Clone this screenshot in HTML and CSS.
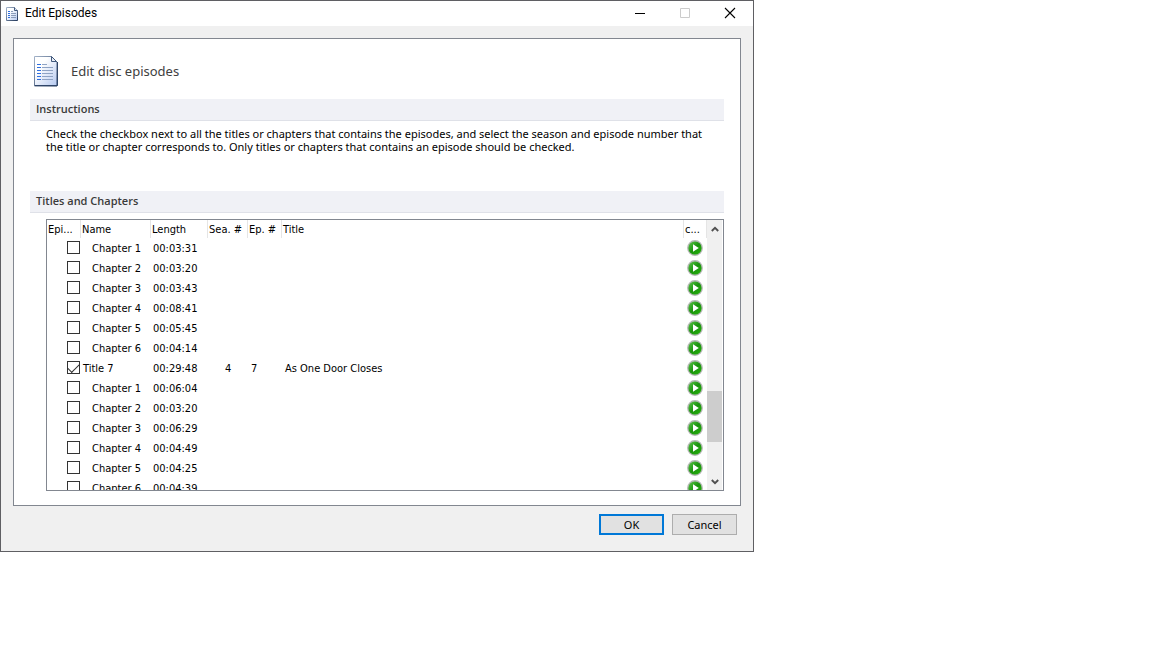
FILE: index.html
```html
<!DOCTYPE html>
<html lang="en">
<head>
<meta charset="utf-8">
<title>Edit Episodes</title>
<link rel="stylesheet" href="styles.css">
</head>
<body>
<svg class="defs" aria-hidden="true">
  <defs>
    <linearGradient id="paper" x1="0" y1="0" x2="1" y2="1"><stop offset="0.3" stop-color="#fff"/><stop offset="1" stop-color="#b4c8f0"/></linearGradient>
    <linearGradient id="edge" x1="0" y1="0" x2="1" y2="1"><stop offset="0" stop-color="#a3b3c9"/><stop offset="1" stop-color="#24395c"/></linearGradient>
    <linearGradient id="green" x1="0" y1="0" x2="1" y2="1"><stop offset="0" stop-color="#5fc84c"/><stop offset="0.5" stop-color="#1b930d"/><stop offset="1" stop-color="#25b40b"/></linearGradient>
    <symbol id="play" viewBox="0 0 16 16">
      <circle cx="8" cy="8" r="7.9" fill="#b4b8b4"/>
      <circle cx="8" cy="8" r="6.6" fill="url(#green)"/>
      <path d="M6 4.2v7.6L11.8 8z" fill="#fff"/>
    </symbol>
  </defs>
</svg>
<main class="window">
  <header class="titlebar">
    <svg class="app-icon" viewBox="0 0 14 16" aria-hidden="true">
      <path d="M1.5 1.5h8l3 3v10h-11z" fill="url(#paper)" stroke="url(#edge)"/>
      <path d="M9.5 1.5v3h3" fill="#dde5f2" stroke="#40587c"/>
      <path d="M3 5.5h2M3 7.5h2M3 9.5h2M3 11.5h2" stroke="#2f6fe0"/>
      <path d="M6 5.5h2M6 7.5h5M6 9.5h5M6 11.5h5" stroke="#8a9cba"/>
    </svg>
    <h1 class="caption">Edit Episodes</h1>
    <div class="controls">
      <button class="control" aria-label="Minimize"><svg viewBox="0 0 10 10"><path d="M0 5.5h10" stroke="#000"/></svg></button>
      <button class="control" aria-label="Maximize" disabled><svg viewBox="0 0 10 10"><path d="M.5.5h9v9h-9z" fill="none" stroke="#ccc"/></svg></button>
      <button class="control" aria-label="Close"><svg viewBox="0 0 10 10"><path d="M0 0l10 10M10 0L0 10" stroke="#000" stroke-width="1.1"/></svg></button>
    </div>
  </header>
  <div class="panel">
    <div class="heading">
      <svg class="doc-icon" viewBox="0 0 24 31" aria-hidden="true">
        <path d="M.5.5h17l5.5 5.5v24H.5z" fill="url(#paper)" stroke="url(#edge)"/>
        <path d="M1 29.500h22.500V6" fill="none" stroke="#2f4568"/>
        <path d="M17.500.5v5h5z" fill="#e8edf5" stroke="#40587c"/>
        <path d="M3 8.500h4M3 11.500h4M3 14.500h4M3 17.500h4M3 20.500h4M3 23.500h4" stroke="#2f6fe0"/>
        <path d="M8 8.500h5M8 11.500h11M8 14.500h11M8 17.500h11M8 20.500h11M8 23.500h11" stroke="#8fa3c4"/>
      </svg>
      <p class="heading-text">Edit disc episodes</p>
    </div>
    <h2 class="section">Instructions</h2>
    <p class="instructions">Check the checkbox next to all the titles or chapters that contains the episodes, and select the season and episode number that the title or chapter corresponds to. Only titles or chapters that contains an episode should be checked.</p>
    <h2 class="section">Titles and Chapters</h2>
    <div class="list">
      <div class="viewport">
        <table class="grid">
          <colgroup><col class="c-check"><col class="c-name"><col class="c-length"><col class="c-season"><col class="c-episode"><col><col class="c-play"></colgroup>
          <thead><tr><th>Epi...</th><th>Name</th><th>Length</th><th>Sea. #</th><th>Ep. #</th><th>Title</th><th>c...</th></tr></thead>
          <tbody>
            <tr><td><input type="checkbox" id="r1"></td><td><label class="chapter" for="r1">Chapter 1</label></td><td>00:03:31</td><td></td><td></td><td></td><td><button class="play" aria-label="Play"><svg><use href="#play"/></svg></button></td></tr>
            <tr><td><input type="checkbox" id="r2"></td><td><label class="chapter" for="r2">Chapter 2</label></td><td>00:03:20</td><td></td><td></td><td></td><td><button class="play" aria-label="Play"><svg><use href="#play"/></svg></button></td></tr>
            <tr><td><input type="checkbox" id="r3"></td><td><label class="chapter" for="r3">Chapter 3</label></td><td>00:03:43</td><td></td><td></td><td></td><td><button class="play" aria-label="Play"><svg><use href="#play"/></svg></button></td></tr>
            <tr><td><input type="checkbox" id="r4"></td><td><label class="chapter" for="r4">Chapter 4</label></td><td>00:08:41</td><td></td><td></td><td></td><td><button class="play" aria-label="Play"><svg><use href="#play"/></svg></button></td></tr>
            <tr><td><input type="checkbox" id="r5"></td><td><label class="chapter" for="r5">Chapter 5</label></td><td>00:05:45</td><td></td><td></td><td></td><td><button class="play" aria-label="Play"><svg><use href="#play"/></svg></button></td></tr>
            <tr><td><input type="checkbox" id="r6"></td><td><label class="chapter" for="r6">Chapter 6</label></td><td>00:04:14</td><td></td><td></td><td></td><td><button class="play" aria-label="Play"><svg><use href="#play"/></svg></button></td></tr>
            <tr><td><input type="checkbox" id="r7" checked></td><td><label for="r7">Title 7</label></td><td>00:29:48</td><td class="number">4</td><td>7</td><td>As One Door Closes</td><td><button class="play" aria-label="Play"><svg><use href="#play"/></svg></button></td></tr>
            <tr><td><input type="checkbox" id="r8"></td><td><label class="chapter" for="r8">Chapter 1</label></td><td>00:06:04</td><td></td><td></td><td></td><td><button class="play" aria-label="Play"><svg><use href="#play"/></svg></button></td></tr>
            <tr><td><input type="checkbox" id="r9"></td><td><label class="chapter" for="r9">Chapter 2</label></td><td>00:03:20</td><td></td><td></td><td></td><td><button class="play" aria-label="Play"><svg><use href="#play"/></svg></button></td></tr>
            <tr><td><input type="checkbox" id="r10"></td><td><label class="chapter" for="r10">Chapter 3</label></td><td>00:06:29</td><td></td><td></td><td></td><td><button class="play" aria-label="Play"><svg><use href="#play"/></svg></button></td></tr>
            <tr><td><input type="checkbox" id="r11"></td><td><label class="chapter" for="r11">Chapter 4</label></td><td>00:04:49</td><td></td><td></td><td></td><td><button class="play" aria-label="Play"><svg><use href="#play"/></svg></button></td></tr>
            <tr><td><input type="checkbox" id="r12"></td><td><label class="chapter" for="r12">Chapter 5</label></td><td>00:04:25</td><td></td><td></td><td></td><td><button class="play" aria-label="Play"><svg><use href="#play"/></svg></button></td></tr>
            <tr><td><input type="checkbox" id="r13"></td><td><label class="chapter" for="r13">Chapter 6</label></td><td>00:04:39</td><td></td><td></td><td></td><td><button class="play" aria-label="Play"><svg><use href="#play"/></svg></button></td></tr>
          </tbody>
        </table>
      </div>
      <div class="scrollbar">
        <button class="arrow" aria-label="Scroll up"><svg viewBox="0 0 8 6"><path d="M.8 5L4 1.800 7.200 5" fill="none" stroke="#505050" stroke-width="1.900"/></svg></button>
        <div class="track"><div class="thumb"></div></div>
        <button class="arrow" aria-label="Scroll down"><svg viewBox="0 0 8 6"><path d="M.8 1L4 4.200 7.200 1" fill="none" stroke="#505050" stroke-width="1.900"/></svg></button>
      </div>
    </div>
  </div>
  <footer class="actions">
    <button class="action default">OK</button>
    <button class="action">Cancel</button>
  </footer>
</main>
</body>
</html>
```
FILE: styles.css
```css
* { box-sizing: border-box; }
body { margin: 0; background: #fff; color: #000; font: 11px/13px "DejaVu Sans Condensed", "DejaVu Sans", sans-serif; }
h1, h2, p { margin: 0; font-weight: normal; }
button { padding: 0; border: 0; background: none; font: inherit; color: inherit; }
svg { display: block; }
.defs { position: absolute; width: 0; height: 0; }
.window { max-width: 754px; border: 1px solid #5f5f63; background: #f0f0f0; }
.titlebar { display: flex; align-items: center; height: 25px; padding: 0 1px 0 4px; background: #fff; }
.app-icon { width: 14px; height: 16px; }
.caption { flex: 1; padding: 0 0 2px 6px; font: 12px/16px Roboto, sans-serif; }
.controls { display: flex; padding-bottom: 1px; }
.control { display: flex; align-items: center; justify-content: center; width: 45px; height: 24px; }
.control svg { width: 10px; height: 10px; overflow: visible; }
.panel { margin: 12px 12px 0; padding: 17px 16px 14px; border: 1px solid #828790; background: #fff; }
.heading { display: flex; align-items: center; gap: 13px; padding: 0 4px 12px; }
.doc-icon { width: 24px; height: 31px; }
.heading-text { padding-bottom: 2px; color: #404040; font: 13px/18px "Noto Sans", sans-serif; }
.section { height: 22px; padding-left: 6px; border-bottom: 1px solid #dfe1e8; background: #f0f1f6; color: #3b3b3b; font: 600 11px/19px "Open Sans", sans-serif; }
.instructions { min-height: 70px; padding: 6px 16px 0; font: 11px/13px "Noto Sans", sans-serif; }
.list { display: flex; height: 272px; margin: 6px 0 0 16px; border: 1px solid #828790; }
.viewport { flex: 1; overflow: hidden; }
.grid { width: 100%; table-layout: fixed; border-collapse: separate; border-spacing: 0; }
.c-check { width: 34px; }
.c-name { width: 70px; }
.c-length { width: 57px; }
.c-season { width: 40px; }
.c-episode { width: 34px; }
.c-play { width: 23px; }
.grid th { height: 18px; padding: 0 0 0 1px; border-right: 1px solid #e5e5e5; font-weight: normal; text-align: left; white-space: nowrap; }
.grid td { height: 20px; padding: 0 0 0 3px; white-space: nowrap; }
.grid td:first-child { padding: 3px 0 0 20px; vertical-align: top; }
.grid td:nth-child(2), .grid td:nth-child(3) { padding-left: 2px; }
.grid td.number { padding-left: 17px; }
.grid input { appearance: none; display: block; width: 13px; height: 13px; margin: 0; border: 1px solid #333; background: #fff; }
.grid input:checked { display: grid; place-items: center; }
.grid input:checked::before { content: ""; width: 10px; height: 5px; border: solid #333; border-width: 0 0 1px 1px; transform: translateY(-1px) rotate(-45deg); }
.chapter { padding-left: 9px; }
.play { display: block; width: 16px; height: 16px; }
.play svg { width: 16px; height: 16px; }
.scrollbar { display: flex; flex-direction: column; width: 16px; border-right: 1px solid #fff; background: #f0f0f0; }
.arrow { display: flex; align-items: center; justify-content: center; height: 17px; }
.arrow svg { width: 8px; height: 6px; }
.track { display: flex; flex: 1; flex-direction: column; justify-content: flex-end; padding-bottom: 31px; }
.thumb { height: 51px; background: #cdcdcd; }
.actions { display: flex; justify-content: flex-end; gap: 8px; padding: 8px 16px 16px; }
.action { width: 65px; height: 21px; border: 1px solid #adadad; background: #e1e1e1; font: 11px/17px "Noto Sans", sans-serif; }
.default { border: 2px solid #0078d7; }
```
